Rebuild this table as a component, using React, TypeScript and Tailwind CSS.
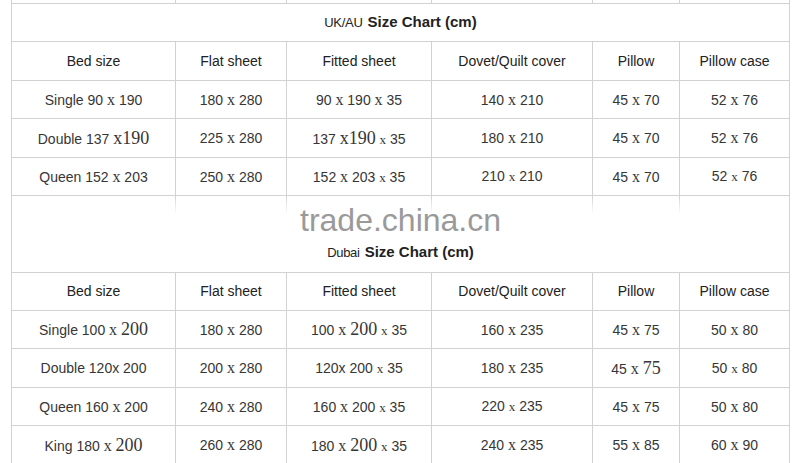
import type { ReactNode } from "react";

const cols = "grid grid-cols-[163px_111px_145px_161px_87px_110px]";
const line = "border-[#d2d2d2]";

// serif "x" and the odd larger serif numbers pasted into the source table
const X = ({ small }: { small?: boolean }) => (
  <span className={`font-['Liberation_Serif',serif] ${small ? "text-[13px]" : "text-[16px]"}`}>x</span>
);
const Big = ({ children }: { children: ReactNode }) => (
  <span className="font-['Liberation_Serif',serif] text-[18px]">{children}</span>
);

const headers = ["Bed size", "Flat sheet", "Fitted sheet", "Dovet/Quilt cover", "Pillow", "Pillow case"];

const ukRows: ReactNode[][] = [
  [
    <>Single 90 <X /> 190</>,
    <>180 <X /> 280</>,
    <>90 <X /> 190 <X /> 35</>,
    <>140 <X /> 210</>,
    <>45 <X /> 70</>,
    <>52 <X /> 76</>,
  ],
  [
    <>Double 137 <Big>x190</Big></>,
    <>225 <X /> 280</>,
    <>137 <Big>x190</Big> <X small /> 35</>,
    <>180 <X /> 210</>,
    <>45 <X /> 70</>,
    <>52 <X /> 76</>,
  ],
  [
    <>Queen 152 <X /> 203</>,
    <>250 <X /> 280</>,
    <>152 <X /> 203 <X small /> 35</>,
    <>210 <X small /> 210</>,
    <>45 <X /> 70</>,
    <>52 <X small /> 76</>,
  ],
];

const dubaiRows: ReactNode[][] = [
  [
    <>Single 100 <X /> <Big>200</Big></>,
    <>180 <X /> 280</>,
    <>100 <X /> <Big>200</Big> <X small /> 35</>,
    <>160 <X /> 235</>,
    <>45 <X /> 75</>,
    <>50 <X /> 80</>,
  ],
  [
    <>Double 120x 200</>,
    <>200 <X /> 280</>,
    <>120x 200 <X small /> 35</>,
    <>180 <X /> 235</>,
    <>45 <X /> <Big>75</Big></>,
    <>50 <X small /> 80</>,
  ],
  [
    <>Queen 160 <X /> 200</>,
    <>240 <X /> 280</>,
    <>160 <X /> 200 <X small /> 35</>,
    <>220 <X small /> 235</>,
    <>45 <X /> 75</>,
    <>50 <X /> 80</>,
  ],
  [
    <>King 180 <X /> <Big>200</Big></>,
    <>260 <X /> 280</>,
    <>180 <X /> <Big>200</Big> <X small /> 35</>,
    <>240 <X /> 235</>,
    <>55 <X /> 85</>,
    <>60 <X /> 90</>,
  ],
];

function Row({ cells, h, header, last }: { cells: ReactNode[]; h: string; header?: boolean; last?: boolean }) {
  return (
    <div className={`${cols} ${h} ${last ? "" : `border-b ${line}`}`}>
      {cells.map((c, i) => (
        <div
          key={i}
          className={`flex items-center justify-center whitespace-nowrap text-[14px] ${
            header ? "text-[#222]" : "text-[#363636]"
          } ${i > 0 ? `border-l ${line}` : ""}`}
        >
          <span>{c}</span>
        </div>
      ))}
    </div>
  );
}

function Title({ region, h }: { region: string; h: string }) {
  return (
    <div className={`${h} flex items-center justify-center gap-[5px] text-[#222]`}>
      <span className="text-[13px] tracking-[-0.3px]">{region}</span>
      <span className="text-[15px] font-bold">Size Chart (cm)</span>
    </div>
  );
}

export default function App() {
  return (
    <div className="relative h-[463px] w-[800px] overflow-hidden bg-white font-['Liberation_Sans',Arial,sans-serif]">
      <div className={`ml-[11px] w-[779px] border-x ${line}`}>
        {/* tail of the row above, cut off by the crop */}
        <Row cells={["", "", "", "", "", ""]} h="h-[4px]" />
        <div className={`border-b ${line}`}>
          <Title region="UK/AU" h="h-[37px]" />
        </div>
        <Row cells={headers} h="h-[39px]" header />
        {ukRows.map((r, i) => (
          <Row key={i} cells={r} h={i % 2 ? "h-[39px]" : "h-[38px]"} />
        ))}

        {/* faded empty row + second title */}
        <div className={`${cols} h-[37px]`}>
          {headers.map((_, i) => (
            <div key={i}>
              {i > 0 && <div className="h-[18px] w-px bg-gradient-to-b from-[#d2d2d2] to-transparent" />}
            </div>
          ))}
        </div>
        <div className={`border-b ${line}`}>
          <Title region="Dubai" h="h-[39px]" />
        </div>

        <Row cells={headers} h="h-[38px]" header />
        {dubaiRows.map((r, i) => (
          <Row key={i} cells={r} h={i === 1 ? "h-[39px]" : "h-[38px]"} last={i === dubaiRows.length - 1} />
        ))}
      </div>

      <div className="absolute left-[300px] top-[204px] text-[32px] leading-none text-[#9a9a9a]">trade.china.cn</div>
    </div>
  );
}
